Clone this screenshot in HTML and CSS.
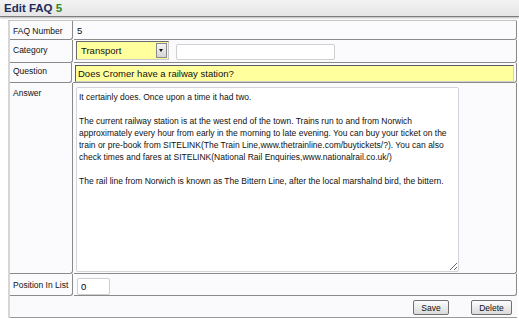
FILE: index.html
```html
<!DOCTYPE html>
<html lang="en">
<head>
    <meta charset="UTF-8">
    <title>Edit FAQ</title>
    <link rel="stylesheet" href="styles.css">
</head>
<body>
    <h1 class="page-title">Edit FAQ <span class="faq-id">5</span></h1>

    <form class="faq-form">
        <div class="row row-number">
            <div class="cell label">FAQ Number</div>
            <div class="cell value">5</div>
        </div>
        <div class="row row-category">
            <div class="cell label">Category</div>
            <div class="cell value">
                <span class="select-box">
                    <select class="category-select" name="category">
                        <option>Transport</option>
                    </select>
                    <span class="select-arrow"></span>
                </span>
                <input type="text" class="text-input new-category" name="newCategory">
            </div>
        </div>
        <div class="row row-question">
            <div class="cell label">Question</div>
            <div class="cell value">
                <input type="text" class="question-input" name="question" value="Does Cromer have a railway station?">
            </div>
        </div>
        <div class="row row-answer">
            <div class="cell label">Answer</div>
            <div class="cell value">
                <textarea class="answer-input" name="answer">It certainly does. Once upon a time it had two.

The current railway station is at the west end of the town. Trains run to and from Norwich approximately every hour from early in the morning to late evening. You can buy your ticket on the train or pre-book from SITELINK(The Train Line,www.thetrainline.com/buytickets/?). You can also check times and fares at SITELINK(National Rail Enquiries,www.nationalrail.co.uk/)

The rail line from Norwich is known as The Bittern Line, after the local marshalnd bird, the bittern.</textarea>
            </div>
        </div>
        <div class="row row-position">
            <div class="cell label">Position In List</div>
            <div class="cell value">
                <input type="text" class="text-input position-input" name="position" value="0">
            </div>
        </div>
        <div class="actions">
            <button type="button" class="btn btn-save">Save</button>
            <button type="button" class="btn btn-delete">Delete</button>
        </div>
    </form>
</body>
</html>
```

FILE: styles.css
```css
body {
    margin: 0;
    font-family: "Liberation Sans", Arial, sans-serif;
    font-size: 8.5px;
    color: #111;
    background-color: #fff;
}
.page-title {
    margin: 0;
    height: 16px;
    padding-left: 4px;
    line-height: 17px;
    font-size: 11.5px;
    font-weight: bold;
    color: #1d2b5b;
    background: linear-gradient(#f3f3f3, #e5e5e5);
    border-bottom: 1px solid #7c7c7c;
    box-shadow: 0 1px 2px rgba(0, 0, 0, 0.3);
}
.faq-id {
    color: #2b8a2b;
}
.faq-form {
    margin: 3px 2px 0 8px;
    border-left: 2px solid #d6d6d6;
    border-top: 1px solid #c4c4c4;
    background-color: #fafafc;
}
.row {
    display: flex;
}
.cell {
    box-sizing: border-box;
    border-right: 1px solid #8a8a8a;
    border-bottom: 1px solid #8a8a8a;
    border-radius: 0 0 3px 0;
    background-color: #fbfbfd;
}
.label {
    width: 63px;
    padding: 4px 0 0 3px;
    line-height: 12px;
    white-space: nowrap;
}
.value {
    flex: 1;
    margin-left: 1px;
    padding: 4px 2px 0 3px;
    line-height: 12px;
    font-size: 9.5px;
}
.row-number .cell { height: 19px; }
.row-category .cell { height: 23px; }
.row-question .cell { height: 20px; }
.row-answer .cell { height: 191px; }
.row-position .cell { height: 22px; }

.row-category .value {
    display: flex;
    align-items: flex-end;
    padding: 1px 0 2px 2px;
}
.row-question .label { padding-top: 2px; }
.row-question .value { padding: 2px 2px 0 2px; }
.row-answer .value { padding: 3px 2px 0 2px; }
.row-position .label { padding-top: 5px; }
.row-position .value { padding: 3px 0 0 3px; }

.select-box {
    display: inline-flex;
    align-items: center;
    box-sizing: border-box;
    width: 93px;
    height: 19px;
    padding: 1px;
    border: 1px solid;
    border-color: #6a6a6a #c8c8c8 #c8c8c8 #6a6a6a;
    background-color: #ffff9e;
}
.category-select {
    flex: 1;
    min-width: 0;
    appearance: none;
    border: 0;
    padding: 0 0 0 3px;
    background: transparent;
    font-family: inherit;
    font-size: 9.5px;
    color: #111;
}
.select-arrow {
    position: relative;
    width: 9px;
    height: 13px;
    border: 1px solid #8a8a8a;
    background: linear-gradient(#f4f4f4, #d6d6d6);
}
.select-arrow::after {
    content: "";
    position: absolute;
    left: 2px;
    top: 5px;
    border-left: 2.5px solid transparent;
    border-right: 2.5px solid transparent;
    border-top: 3px solid #111;
}
.text-input {
    box-sizing: border-box;
    height: 16px;
    border: 1px solid #cfcfcf;
    border-radius: 2px;
    background-color: #fff;
    font-family: inherit;
    font-size: 9.5px;
    padding: 0 3px;
}
.new-category {
    width: 159px;
    margin-left: 7px;
}
.question-input {
    box-sizing: border-box;
    width: 439px;
    height: 17px;
    padding: 0 2px;
    border: 1px solid;
    border-color: #5a5a5a #d0d0d0 #d0d0d0 #5a5a5a;
    background-color: #ffff9e;
    font-family: inherit;
    font-size: 9.5px;
    color: #111;
}
.answer-input {
    display: block;
    box-sizing: border-box;
    width: 383px;
    height: 185px;
    margin-top: 1px;
    padding: 3px 2px;
    border: 1px solid #d4d4d8;
    border-radius: 2px;
    background-color: #fff;
    font-family: inherit;
    font-size: 8.5px;
    line-height: 12px;
    color: #111;
}
.position-input {
    width: 33px;
    height: 17px;
    margin-top: 1px;
}
.actions {
    display: flex;
    justify-content: flex-end;
    gap: 22px;
    height: 22px;
    box-sizing: border-box;
    padding: 4px 5px 0 0;
    border-bottom: 1px solid #9a9a9a;
}
.btn {
    height: 15px;
    padding: 0;
    border: 1px solid #707070;
    border-radius: 2px;
    background: linear-gradient(#fdfdfd, #dadada);
    font-family: inherit;
    font-size: 8.5px;
    color: #111;
}
.btn-save { width: 36px; }
.btn-delete { width: 41px; }
```
